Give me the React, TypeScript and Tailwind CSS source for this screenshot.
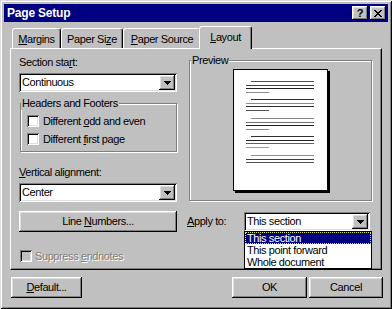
import React from 'react';

const RAISED =
  'shadow-[inset_-1px_-1px_#000,inset_1px_1px_#fff,inset_-2px_-2px_#808080,inset_2px_2px_#dfdfdf]';
const SUNKEN =
  'shadow-[inset_1px_1px_#808080,inset_-1px_-1px_#fff,inset_2px_2px_#000,inset_-2px_-2px_#dfdfdf]';
const ETCH = 'border border-[#808080] shadow-[inset_1px_1px_#fff,1px_1px_#fff]';

function U({ children }: { children: React.ReactNode }) {
  return <span className="underline underline-offset-[1px] decoration-1">{children}</span>;
}

function Arrow() {
  return (
    <svg width="7" height="4" viewBox="0 0 7 4" shapeRendering="crispEdges">
      <path d="M0 0h7v1H0z M1 1h5v1H1z M2 2h3v1H2z M3 3h1v1H3z" fill="#000" />
    </svg>
  );
}

function Combo({ value, className = '' }: { value: string; className?: string }) {
  return (
    <div className={`flex h-[19px] bg-white p-[2px] ${SUNKEN} ${className}`}>
      <div className="flex-1 pl-[1px] leading-[15px] whitespace-nowrap">{value}</div>
      <div className={`flex h-[15px] w-[16px] items-center justify-center bg-[#c0c0c0] ${RAISED}`}>
        <Arrow />
      </div>
    </div>
  );
}

function Check({ disabled = false }: { disabled?: boolean }) {
  return (
    <div
      className={`h-[12px] w-[12px] shrink-0 ${disabled ? 'bg-[#c0c0c0]' : 'bg-white'} ${SUNKEN}`}
    />
  );
}

const paragraphs: { lines: ('i' | 'f' | 's')[]; cls: string; colors: string[] }[] = [
  { lines: ['i', 'f', 'f', 's'], cls: '', colors: ['bg-[#505050]', 'bg-[#404040]', 'bg-[#202020]', 'bg-[#8a8a8a]'] },
  { lines: ['i', 'f', 'f', 's'], cls: 'mt-[6px]', colors: ['bg-[#303030]', 'bg-[#8a8a8a]', 'bg-[#303030]', 'bg-[#505050]'] },
  { lines: ['i', 'f', 'f', 's'], cls: 'mt-[7px]', colors: ['bg-[#8a8a8a]', 'bg-[#707070]', 'bg-[#202020]', 'bg-[#8a8a8a]'] },
  { lines: ['i', 'f', 'f', 's'], cls: 'mt-[6px]', colors: ['bg-[#303030]', 'bg-[#202020]', 'bg-[#606060]', 'bg-[#a0a0a0]'] },
  { lines: ['i', 'f', 'f'], cls: 'mt-[7px]', colors: ['bg-[#8a8a8a]', 'bg-[#404040]', 'bg-[#505050]'] },
];

const lineGap = ['', 'mt-[3px]', 'mt-[2px]', 'mt-[3px]'];

function PagePreview() {
  return (
    <div className="h-[122px] w-[95px] border border-black bg-white pl-[12px] pt-[11px] shadow-[2px_2px_0_#000]">
      {paragraphs.map((p, pi) => (
        <div key={pi} className={`flex flex-col ${p.cls}`}>
          {p.lines.map((l, li) => (
            <div
              key={li}
              className={`h-[1px] ${lineGap[li]} ${p.colors[li]} ${
                l === 'i' ? 'ml-[5px] w-[63px]' : l === 'f' ? 'w-[68px]' : 'w-[23px]'
              }`}
            />
          ))}
        </div>
      ))}
    </div>
  );
}

function Tab({
  label,
  className,
  selected = false,
}: {
  label: React.ReactNode;
  className: string;
  selected?: boolean;
}) {
  return (
    <div
      className={`flex items-center justify-center whitespace-nowrap rounded-t-[3px] border-t border-l border-r border-t-white border-l-white border-r-black bg-[#c0c0c0] shadow-[inset_-1px_0_#808080] ${
        selected ? 'relative z-10 -mb-[1px] h-[23px] pb-[1px]' : 'h-[20px] pt-[1px]'
      } ${className}`}
    >
      {label}
    </div>
  );
}

export default function App() {
  return (
    <div
      className={`flex h-[309px] w-[392px] flex-col bg-[#c0c0c0] p-[4px] text-[11px] tracking-[-0.4px] text-black [font-family:'Liberation_Sans',Arial,sans-serif] shadow-[inset_1px_1px_#dfdfdf,inset_-1px_-1px_#000,inset_2px_2px_#fff,inset_-2px_-2px_#808080]`}
    >
      {/* Title bar */}
      <div className="flex h-[18px] items-center bg-[#000080] pl-[3px] pr-[2px]">
        <div className="flex-1 text-[12px] font-bold tracking-[-0.2px] text-white">Page Setup</div>
        <div className="flex gap-[2px]">
          <div
            className={`flex h-[14px] w-[16px] items-center justify-center bg-[#c0c0c0] text-[11px] font-bold leading-none ${RAISED}`}
          >
            ?
          </div>
          <div className={`flex h-[14px] w-[16px] items-center justify-center bg-[#c0c0c0] ${RAISED}`}>
            <svg width="8" height="7" viewBox="0 0 8 7" shapeRendering="crispEdges">
              <path
                d="M0 0h2v1H0z M6 0h2v1H6z M1 1h2v1H1z M5 1h2v1H5z M2 2h4v1H2z M3 3h2v1H3z M2 4h4v1H2z M1 5h2v1H1z M5 5h2v1H5z M0 6h2v1H0z M6 6h2v1H6z"
                fill="#000"
              />
            </svg>
          </div>
        </div>
      </div>

      {/* Body */}
      <div className="flex flex-col px-[6px] pt-[4px]">
        {/* Tabs */}
        <div className="flex h-[22px] items-end pl-[2px]">
          <Tab className="w-[49px]" label={<><U>M</U>argins</>} />
          <Tab className="w-[62px]" label={<>Paper Si<U>z</U>e</>} />
          <Tab className="w-[78px]" label={<><U>P</U>aper Source</>} />
          <Tab className="-ml-[2px] w-[53px]" selected label={<><U>L</U>ayout</>} />
        </div>

        {/* Panel */}
        <div className="flex h-[222px] flex-col border border-t-white border-l-white border-r-black border-b-black pl-[8px] pr-[9px] pt-[7px] shadow-[inset_-1px_-1px_#808080]">
          <div className="flex gap-[12px]">
            {/* Left column */}
            <div className="flex w-[158px] flex-col">
              <div className="h-[13px] leading-[13px]">
                Section sta<U>r</U>t:
              </div>
              <Combo className="mt-[4px]" value="Continuous" />

              <div className={`relative mt-[11px] ml-[1px] h-[49px] pl-[6px] pt-[8px] ${ETCH}`}>
                <div className="absolute -top-[7px] left-0 bg-[#c0c0c0] px-[1px] leading-[13px]">
                  Headers and Footers
                </div>
                <div className="flex h-[18px] items-center gap-[4px]">
                  <Check />
                  <span>
                    Different <U>o</U>dd and even
                  </span>
                </div>
                <div className="flex h-[18px] items-center gap-[4px]">
                  <Check />
                  <span>
                    Different <U>f</U>irst page
                  </span>
                </div>
              </div>

              <div className="mt-[14px] h-[13px] leading-[13px]">
                <U>V</U>ertical alignment:
              </div>
              <Combo className="mt-[4px]" value="Center" />
            </div>

            {/* Right column */}
            <div className="flex w-[183px] flex-col">
              <div className={`relative mt-[4px] flex h-[141px] justify-center pt-[8px] ${ETCH}`}>
                <div className="absolute -top-[7px] left-[1px] bg-[#c0c0c0] px-[1px] leading-[13px]">
                  Preview
                </div>
                <PagePreview />
              </div>
            </div>
          </div>

          {/* Row 2 */}
          <div className="mt-[9px] flex h-[21px] items-center">
            <div className={`flex h-[21px] w-[158px] items-center justify-center ${RAISED}`}>
              Line&nbsp;<U>N</U>umbers...
            </div>
            <div className="ml-[10px] w-[57px]">
              <U>A</U>pply to:
            </div>
            <div className="relative w-[126px]">
              <Combo value="This section" />
              <div className="absolute left-0 top-full z-20 flex w-[128px] flex-col border border-black bg-white">
                <div className="h-[12px] bg-[#000080] pl-[2px] leading-[12px] text-white outline-1 -outline-offset-1 outline-dotted outline-[#e0e060]">
                  This section
                </div>
                <div className="h-[12px] pl-[2px] leading-[12px]">This point forward</div>
                <div className="h-[12px] pl-[2px] leading-[12px]">Whole document</div>
              </div>
            </div>
          </div>

          {/* Row 3 */}
          <div className="mt-[16px] ml-[1px] flex h-[16px] items-center gap-[3px]">
            <Check disabled />
            <span className="text-[#808080] [text-shadow:1px_1px_0_#fff]">
              Suppress <U>e</U>ndnotes
            </span>
          </div>
        </div>

        {/* Bottom buttons */}
        <div className="mt-[7px] -mr-[1px] flex pl-[1px]">
          <div className={`flex h-[21px] w-[71px] items-center justify-center ${RAISED}`}>
            <U>D</U>efault...
          </div>
          <div className="flex-1" />
          <div className={`flex h-[21px] w-[75px] items-center justify-center ${RAISED}`}>OK</div>
          <div className={`ml-[2px] flex h-[21px] w-[74px] items-center justify-center ${RAISED}`}>
            Cancel
          </div>
        </div>
      </div>
    </div>
  );
}
